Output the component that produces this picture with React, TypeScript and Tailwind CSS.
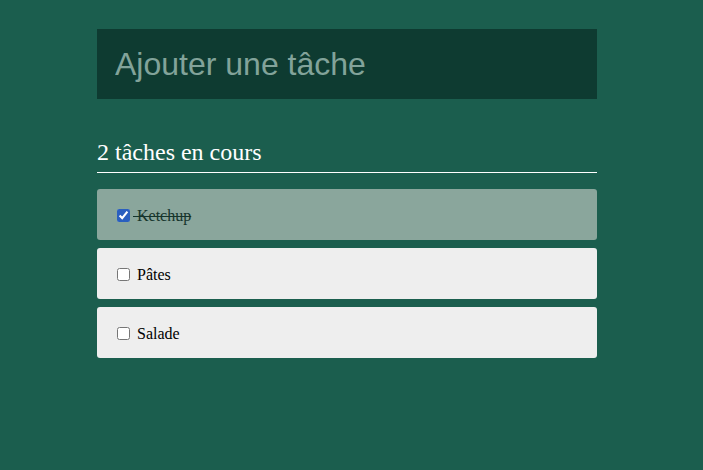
import React, { useState } from "react";

type Task = { id: number; label: string; done: boolean };

export default function App() {
  const [tasks, setTasks] = useState<Task[]>([
    { id: 1, label: "Ketchup", done: true },
    { id: 2, label: "Pâtes", done: false },
    { id: 3, label: "Salade", done: false },
  ]);
  const toggle = (id: number) =>
    setTasks((t) => t.map((x) => (x.id === id ? { ...x, done: !x.done } : x)));
  const remaining = tasks.length - tasks.filter((t) => t.done).length;

  return (
    <div className="min-h-[470px] w-full bg-[#1b5e4e] pt-[29px]">
      <div className="ml-[97px] w-[500px]">
        <input
          type="text"
          placeholder="Ajouter une tâche"
          className="block h-[70px] w-full bg-[#0e3b31] px-[18px] text-[32px] text-white outline-none placeholder:text-[#82a39a] [font-family:'Liberation_Sans',Arial,sans-serif]"
        />
        <h2 className="mt-[39px] border-b border-white pb-[6px] text-[24px] leading-[28px] text-white [font-family:'Liberation_Serif','Times_New_Roman',serif]">
          {remaining} tâches en cours
        </h2>
        <div className="mt-[16px] flex flex-col gap-[8px] [font-family:'Liberation_Serif','Times_New_Roman',serif]">
          {tasks.map((t) => (
            <label
              key={t.id}
              className={`flex h-[51px] items-center whitespace-pre rounded-[3px] px-[16px] pt-[2px] text-[16px] ${
                t.done ? "bg-[#8aa69c] text-[#16352c]" : "bg-[#eeeeee] text-black"
              }`}
            >
              <input
                type="checkbox"
                checked={t.done}
                onChange={() => toggle(t.id)}
                className="m-0 ml-[4px] mr-[3px] h-[13px] w-[13px] [accent-color:#2a5fbf]"
              />
              <span className={t.done ? "line-through" : ""}>{" " + t.label}</span>
            </label>
          ))}
        </div>
      </div>
    </div>
  );
}
